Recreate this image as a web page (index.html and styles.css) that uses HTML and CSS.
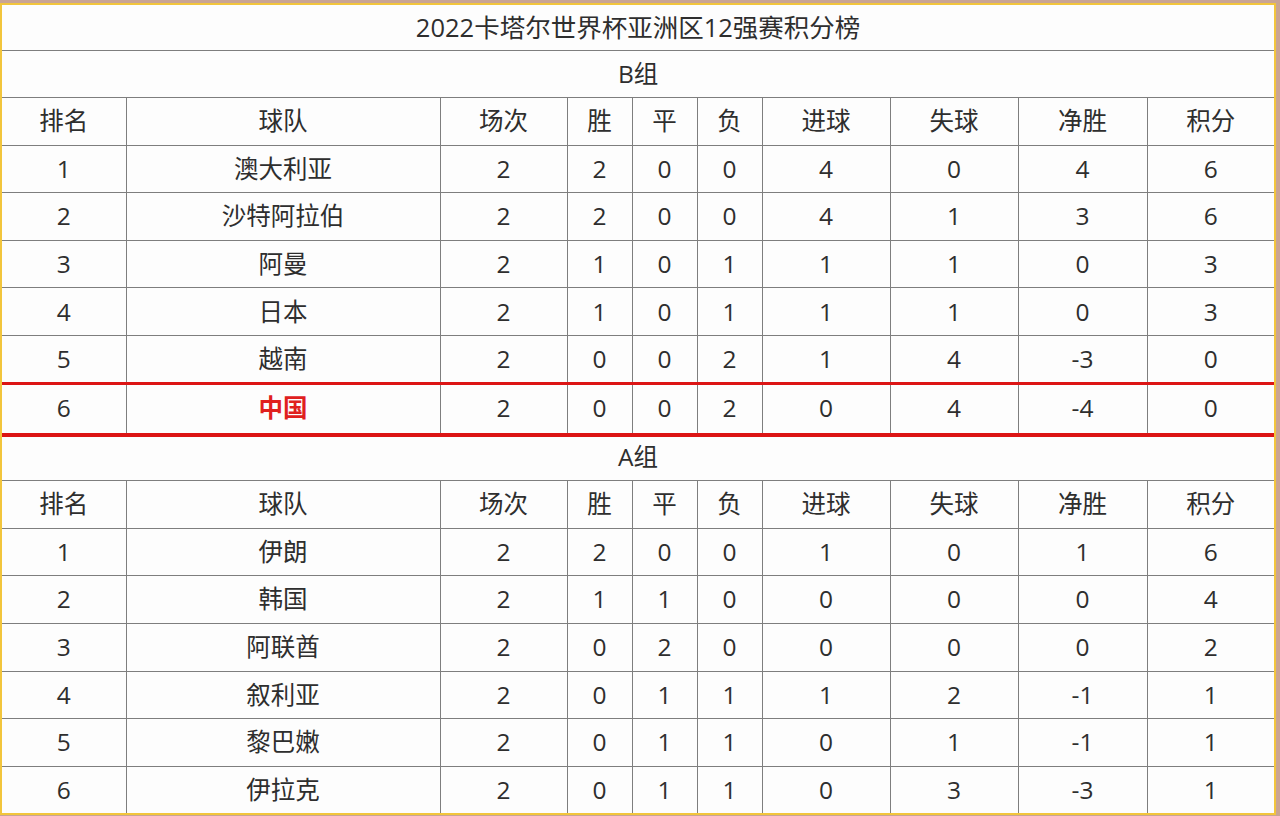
FILE: index.html
```html
<!DOCTYPE html>
<html lang="zh-CN">
<head>
<meta charset="utf-8">
<title>2022卡塔尔世界杯亚洲区12强赛积分榜</title>
<link rel="stylesheet" href="styles.css">
</head>
<body>
<div class="frame">
  <table class="standings">
    <colgroup>
      <col class="c-rank"><col class="c-team"><col class="c-played"><col class="c-small"><col class="c-small"><col class="c-small"><col class="c-mid"><col class="c-mid"><col class="c-mid2"><col class="c-pts">
    </colgroup>
    <tbody>
      <tr class="title"><td colspan="10">2022卡塔尔世界杯亚洲区12强赛积分榜</td></tr>
      <tr><td colspan="10">B组</td></tr>
      <tr><td>排名</td><td>球队</td><td>场次</td><td>胜</td><td>平</td><td>负</td><td>进球</td><td>失球</td><td>净胜</td><td>积分</td></tr>
      <tr><td>1</td><td>澳大利亚</td><td>2</td><td>2</td><td>0</td><td>0</td><td>4</td><td>0</td><td>4</td><td>6</td></tr>
      <tr><td>2</td><td>沙特阿拉伯</td><td>2</td><td>2</td><td>0</td><td>0</td><td>4</td><td>1</td><td>3</td><td>6</td></tr>
      <tr><td>3</td><td>阿曼</td><td>2</td><td>1</td><td>0</td><td>1</td><td>1</td><td>1</td><td>0</td><td>3</td></tr>
      <tr><td>4</td><td>日本</td><td>2</td><td>1</td><td>0</td><td>1</td><td>1</td><td>1</td><td>0</td><td>3</td></tr>
      <tr><td>5</td><td>越南</td><td>2</td><td>0</td><td>0</td><td>2</td><td>1</td><td>4</td><td>-3</td><td>0</td></tr>
      <tr class="china-row"><td>6</td><td class="china">中国</td><td>2</td><td>0</td><td>0</td><td>2</td><td>0</td><td>4</td><td>-4</td><td>0</td></tr>
      <tr><td colspan="10">A组</td></tr>
      <tr><td>排名</td><td>球队</td><td>场次</td><td>胜</td><td>平</td><td>负</td><td>进球</td><td>失球</td><td>净胜</td><td>积分</td></tr>
      <tr><td>1</td><td>伊朗</td><td>2</td><td>2</td><td>0</td><td>0</td><td>1</td><td>0</td><td>1</td><td>6</td></tr>
      <tr><td>2</td><td>韩国</td><td>2</td><td>1</td><td>1</td><td>0</td><td>0</td><td>0</td><td>0</td><td>4</td></tr>
      <tr><td>3</td><td>阿联酋</td><td>2</td><td>0</td><td>2</td><td>0</td><td>0</td><td>0</td><td>0</td><td>2</td></tr>
      <tr><td>4</td><td>叙利亚</td><td>2</td><td>0</td><td>1</td><td>1</td><td>1</td><td>2</td><td>-1</td><td>1</td></tr>
      <tr><td>5</td><td>黎巴嫩</td><td>2</td><td>0</td><td>1</td><td>1</td><td>0</td><td>1</td><td>-1</td><td>1</td></tr>
      <tr><td>6</td><td>伊拉克</td><td>2</td><td>0</td><td>1</td><td>1</td><td>0</td><td>3</td><td>-3</td><td>1</td></tr>
    </tbody>
  </table>
  <div class="highlight"></div>
</div>
</body>
</html>
```

FILE: styles.css
```css
html, body {
  margin: 0;
  padding: 0;
}
body {
  width: 1280px;
  height: 816px;
  background: #c9a494;
  overflow: hidden;
}
.frame {
  position: relative;
  margin-top: 3px;
  width: 1272px;
  height: 808px;
  border: 2px solid #f2c53c;
  background: #fdfdfd;
  overflow: hidden;
}
.standings {
  width: 1272px;
  table-layout: fixed;
  border-collapse: collapse;
  border-style: hidden;
  font-family: "Open Sans", "Noto Sans CJK SC", sans-serif;
  font-size: 24.5px;
  color: #2e2e2e;
}
.c-rank { width: 124px; }
.c-team { width: 314px; }
.c-played { width: 127px; }
.c-small { width: 65px; }
.c-mid { width: 128px; }
.c-mid2 { width: 129px; }
.c-pts { width: 127px; }
.standings td {
  border: 1px solid #7e7e7e;
  height: 46.6px;
  padding: 0;
  text-align: center;
  vertical-align: middle;
  line-height: 1;
}
.standings .title td {
  height: 44.5px;
  font-size: 25.5px;
}
.standings .china-row td {
  height: 49px;
}
.standings .china {
  color: #e0201e;
  font-weight: bold;
}
.highlight {
  position: absolute;
  left: -2px;
  top: 377px;
  width: 1274px;
  height: 48px;
  border-top: 3px solid #dc1414;
  border-bottom: 4px solid #dc1414;
}
```
